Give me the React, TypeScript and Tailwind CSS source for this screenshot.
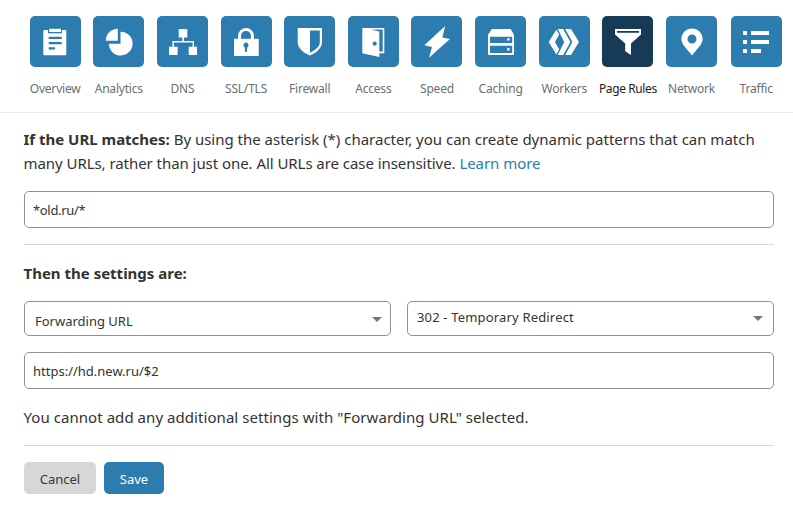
import React from "react";

const icons: Record<string, React.ReactNode> = {
  Overview: (
    <>
      <path d="M14.3 14H35.3Q36.3 14 36.3 15V38.3Q36.3 39.3 35.3 39.3H14.3Q13.3 39.3 13.3 38.3V15Q13.3 14 14.3 14Z" />
      <path className="fill-[#2c7cb0]" d="M18 12H32V17.3H18Z" />
      <path d="M19.2 12.8H31V16H19.2Z" />
      <path className="fill-[#2c7cb0]" d="M18.7 20.8H31.7V23H18.7ZM18.7 26H31.7V28.2H18.7ZM18.7 31.2H25V33.4H18.7Z" />
    </>
  ),
  Analytics: <path d="M24.8 12.7V24.7H12.7A12.1 12.1 0 0 1 24.8 12.7ZM27.5 15.7A11.9 11.9 0 1 1 15.8 27.8H27.5Z" />,
  DNS: <path d="M21.7 13H30.3V21.4H27V25H37V30.8H40V39H31.7V30.8H35.6V26.5H16.8V30.8H20.6V39H12V30.8H15.4V25H25.4V21.4H21.7Z" />,
  "SSL/TLS": (
    <>
      <path d="M13 22.8H37.7V40H13Z" />
      <path className="fill-none stroke-white" strokeWidth="3" d="M18.6 24V19.8A6.4 6.4 0 0 1 31.4 19.8V24" />
      <path className="fill-[#2c7cb0]" d="M25 26.6A2.7 2.7 0 0 1 26.1 31.7V35.8H23.9V31.7A2.7 2.7 0 0 1 25 26.6Z" />
    </>
  ),
  Firewall: <path fillRule="evenodd" d="M13.7 12H38V26C38 32 33 36.3 25.9 39.5C18.7 36.3 13.7 32 13.7 26ZM26 14.6V36.7C31.8 34 35.8 30.7 35.8 26V14.6Z" />,
  Access: (
    <>
      <path d="M14.3 12H36.3V37.2H31V35.6H34.7V13.6H23L31.3 15.6V41L14.3 37.3Z" />
      <circle className="fill-[#2c7cb0]" cx="26.7" cy="27.7" r="2.1" />
    </>
  ),
  Speed: <path d="M34.2 10L13.3 29.2L21 31L18 41.8L39 23L31.3 21.5Z" />,
  Caching: (
    <>
      <path fillRule="evenodd" d="M16.8 13H35.6L39 18.8V38Q39 39 38 39H14Q13 39 13 38V18.8ZM15 20.8V27H37.2V20.8ZM15 29.8V37H37.2V29.8Z" />
      <path d="M32.2 22.2H34.6V24.6H32.2ZM32.2 32H34.6V34.4H32.2Z" />
    </>
  ),
  Workers: <path d="M17.3 13.8L20.2 18.6L16 26L20.2 33.6L17.3 38.4L9.7 26ZM18.8 13H24.2L31.4 26L24.2 39H18.8L25.2 26ZM26.2 13H32L40 26L32 39H26.2L33.4 26Z" />,
  "Page Rules": <path fillRule="evenodd" d="M13 13H39V18.6L29 27.6V39L23.2 35.3V27.6L13 18.6ZM15 14.9V16.7H37V14.9Z" />,
  Network: <path fillRule="evenodd" d="M26 12.4A10.6 10.6 0 0 1 36.6 23C36.6 28.5 31 33 26 39.4C21 33 15.4 28.5 15.4 23A10.6 10.6 0 0 1 26 12.4ZM26 18.5A4.5 4.5 0 1 0 26 27.5A4.5 4.5 0 1 0 26 18.5Z" />,
  Traffic: <path d="M12 15H16V19H12ZM20 15H38V19H20ZM12 24H16V28H12ZM20 24H38V28H20ZM12 33H16V37H12ZM20 33H30V37H20Z" />,
};

function NavItem({ label, active }: { label: string; active?: boolean }) {
  return (
    <a className="flex w-[63.65px] shrink-0 flex-col items-center last:ml-px">
      <span className={active ? "size-[51px] rounded-[5px] bg-[#173b56]" : "size-[51px] rounded-[5px] bg-[#2c7cb0]"}>
        <svg viewBox="0 0 51 51" className="size-[51px] fill-white">{icons[label]}</svg>
      </span>
      <span className={active ? "mt-3 text-xs leading-5 tracking-[-0.4px] whitespace-nowrap text-[#1d1d1f]" : "mt-3 text-xs leading-5 tracking-[-0.2px] whitespace-nowrap text-[#6b6e73]"}>
        {label}
      </span>
    </a>
  );
}

function Caret() {
  return <span className="border-x-[5px] border-t-[5px] border-x-transparent border-t-[#72777d]" />;
}

export default function App() {
  return (
    <div className="h-[524px] w-[793px] overflow-hidden bg-white font-['Noto_Sans',sans-serif] text-[15px] text-[#333]">
      <nav className="flex h-[113px] border-b border-[#ebebeb] pt-4 pl-[23.3px]">
        {Object.keys(icons).map((label) => (
          <NavItem key={label} label={label} active={label === "Page Rules"} />
        ))}
      </nav>
      <main className="flex w-[774px] flex-col pt-[14px] pl-6">
        <p className="-ml-[0.5px] leading-6 tracking-[-0.01px] whitespace-nowrap">
          <b>If the URL matches:</b> By using the asterisk (*) character, you can create dynamic patterns that can match
          <br />
          <span className="tracking-[-0.055px]">
            many URLs, rather than just one. All URLs are case insensitive. <a className="text-[#2c7cb0]">Learn more</a>
          </span>
        </p>
        <div className="mt-4 flex h-[37px] items-center rounded-[5px] border border-[#8d9196] px-2 pt-0.5 text-[13px] tracking-[-0.33px]">*old.ru/*</div>
        <hr className="mt-4 border-[#d5d7d8]" />
        <h3 className="mt-4 -ml-[0.5px] leading-6 font-bold">Then the settings are:</h3>
        <div className="mt-4 grid grid-cols-2 gap-4">
          <div className="flex h-[35px] items-center justify-between rounded-[5px] border border-[#8d9196] pt-0.5 pr-2 pl-2.5 text-[13px]">
            <span className="pt-1">Forwarding URL</span>
            <Caret />
          </div>
          <div className="flex h-[35px] items-center justify-between rounded-[5px] border border-[#8d9196] pr-2.5 pl-[9px] text-[13px]">
            <span className="pb-0.5 tracking-[0.17px]">302 - Temporary Redirect</span>
            <Caret />
          </div>
        </div>
        <div className="mt-4 flex h-[37px] items-center rounded-[5px] border border-[#8d9196] px-2 pt-0.5 text-[13px]">https://hd.new.ru/$2</div>
        <p className="mt-4 -ml-[0.5px] leading-6 tracking-[0.055px]">You cannot add any additional settings with "Forwarding URL" selected.</p>
        <hr className="mt-4 border-[#d5d7d8]" />
        <div className="mt-4 flex gap-2 text-[13px]">
          <button className="h-8 w-[72px] rounded-[5px] bg-[#d5d7d8] pt-1 text-[#36393a]">Cancel</button>
          <button className="h-8 w-[60px] rounded-[5px] bg-[#2c7cb0] pt-1 text-white">Save</button>
        </div>
      </main>
    </div>
  );
}
